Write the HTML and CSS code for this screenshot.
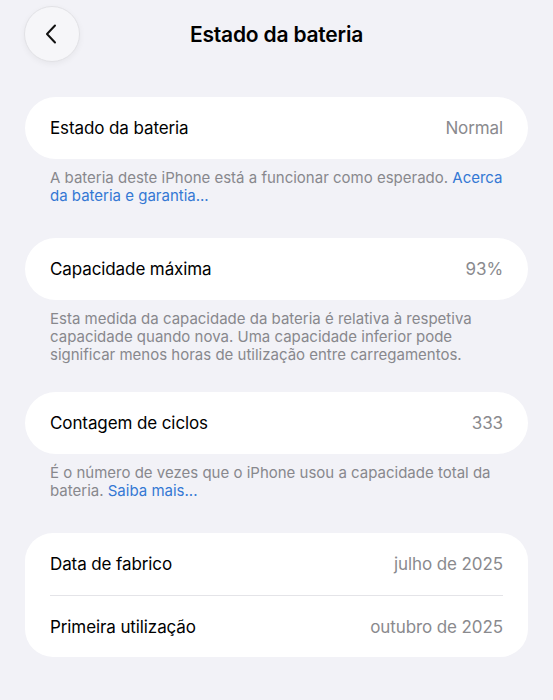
FILE: index.html
```html
<!DOCTYPE html>
<html lang="pt">
<head>
<meta charset="utf-8">
<title>Estado da bateria</title>
<link rel="stylesheet" href="styles.css">
</head>
<body>
<div class="screen">
  <header class="nav">
    <button class="back" aria-label="Voltar">
      <svg width="12" height="20" viewBox="0 0 12 20"><path d="M10 1.5 L2 10 L10 18.5" fill="none" stroke="#111" stroke-width="2" stroke-linecap="round" stroke-linejoin="round"/></svg>
    </button>
    <h1 class="title">Estado da bateria</h1>
    <span class="spacer"></span>
  </header>

  <main class="content">
    <section class="group pill">
      <div class="row"><span class="label">Estado da bateria</span><span class="value">Normal</span></div>
    </section>
    <p class="note">A bateria deste iPhone está a funcionar como esperado. <a class="link">Acerca da bateria e garantia...</a></p>

    <section class="group pill">
      <div class="row"><span class="label">Capacidade máxima</span><span class="value">93%</span></div>
    </section>
    <p class="note tight">Esta medida da capacidade da bateria é relativa à respetiva capacidade quando nova. Uma capacidade inferior pode significar menos horas de utilização entre carregamentos.</p>

    <section class="group pill">
      <div class="row"><span class="label">Contagem de ciclos</span><span class="value">333</span></div>
    </section>
    <p class="note">É o número de vezes que o iPhone usou a capacidade total da bateria. <a class="link">Saiba mais...</a></p>

    <section class="group multi">
      <div class="row"><span class="label">Data de fabrico</span><span class="value">julho de 2025</span></div>
      <div class="row divided"><span class="label">Primeira utilização</span><span class="value">outubro de 2025</span></div>
    </section>
  </main>
</div>
</body>
</html>
```

FILE: styles.css
```css
* { box-sizing: border-box; }
html, body {
  margin: 0;
  padding: 0;
  background: #f2f2f7;
}
body {
  font-family: Inter, "Noto Sans", "Liberation Sans", sans-serif;
  color: #000;
  -webkit-font-smoothing: antialiased;
}
.screen {
  width: 553px;
  min-height: 700px;
}
.nav {
  display: grid;
  grid-template-columns: 56px 1fr 56px;
  align-items: center;
  padding: 6px 24px 0 24px;
}
.back {
  width: 56px;
  height: 56px;
  border-radius: 50%;
  border: 1px solid #e2e2e6;
  background: #f6f6f9;
  box-shadow: 0 2px 6px rgba(0,0,0,0.05);
  display: flex;
  align-items: center;
  justify-content: center;
  padding: 0 2px 0 0;
}
.title {
  margin: 0;
  text-align: center;
  font-size: 21px;
  font-weight: 600;
  letter-spacing: -0.2px;
}
.content {
  padding: 35px 25px 0 25px;
}
.group {
  background: #fff;
}
.pill { border-radius: 31px; }
.multi { border-radius: 28px; }
.row {
  height: 62px;
  display: flex;
  align-items: center;
  justify-content: space-between;
  margin: 0 25px;
  font-size: 17px;
  letter-spacing: -0.1px;
}
.divided { border-top: 1px solid #e4e4e8; }
.value { color: #8a8a8e; }
.note {
  margin: 10px 0 33px 0;
  padding: 0 25px;
  font-size: 15px;
  line-height: 18px;
  color: #88888d;
}
.note.tight { margin-bottom: 28px; }
.link { color: #3478d4; }
```
